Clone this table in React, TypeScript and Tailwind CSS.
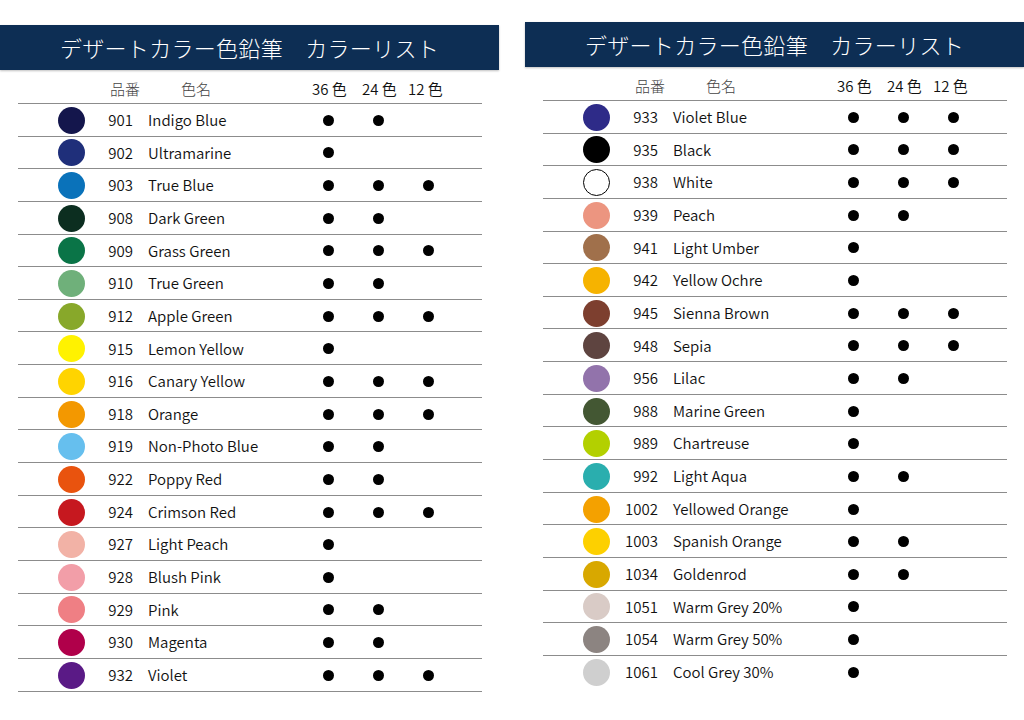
type Pencil = {
  code: string
  name: string
  color: string
  sets: [boolean, boolean, boolean]
}

const leftList: Pencil[] = [
  { code: "901", name: "Indigo Blue", color: "#14164c", sets: [true, true, false] },
  { code: "902", name: "Ultramarine", color: "#1f2f7a", sets: [true, false, false] },
  { code: "903", name: "True Blue", color: "#0a72ba", sets: [true, true, true] },
  { code: "908", name: "Dark Green", color: "#0c2e20", sets: [true, true, false] },
  { code: "909", name: "Grass Green", color: "#0a7447", sets: [true, true, true] },
  { code: "910", name: "True Green", color: "#6fb07a", sets: [true, true, false] },
  { code: "912", name: "Apple Green", color: "#88a82a", sets: [true, true, true] },
  { code: "915", name: "Lemon Yellow", color: "#fff200", sets: [true, false, false] },
  { code: "916", name: "Canary Yellow", color: "#ffd400", sets: [true, true, true] },
  { code: "918", name: "Orange", color: "#f39800", sets: [true, true, true] },
  { code: "919", name: "Non-Photo Blue", color: "#66bfee", sets: [true, true, false] },
  { code: "922", name: "Poppy Red", color: "#e9530e", sets: [true, true, false] },
  { code: "924", name: "Crimson Red", color: "#c6181f", sets: [true, true, true] },
  { code: "927", name: "Light Peach", color: "#f2b2a6", sets: [true, false, false] },
  { code: "928", name: "Blush Pink", color: "#f29ea8", sets: [true, false, false] },
  { code: "929", name: "Pink", color: "#ef7f84", sets: [true, true, false] },
  { code: "930", name: "Magenta", color: "#b0004a", sets: [true, true, false] },
  { code: "932", name: "Violet", color: "#5a1a86", sets: [true, true, true] },
]

const rightList: Pencil[] = [
  { code: "933", name: "Violet Blue", color: "#2e2b88", sets: [true, true, true] },
  { code: "935", name: "Black", color: "#000000", sets: [true, true, true] },
  { code: "938", name: "White", color: "#ffffff", sets: [true, true, true] },
  { code: "939", name: "Peach", color: "#ec9580", sets: [true, true, false] },
  { code: "941", name: "Light Umber", color: "#a0704b", sets: [true, false, false] },
  { code: "942", name: "Yellow Ochre", color: "#f6b300", sets: [true, false, false] },
  { code: "945", name: "Sienna Brown", color: "#7d3f2f", sets: [true, true, true] },
  { code: "948", name: "Sepia", color: "#5e4440", sets: [true, true, true] },
  { code: "956", name: "Lilac", color: "#9273ab", sets: [true, true, false] },
  { code: "988", name: "Marine Green", color: "#435733", sets: [true, false, false] },
  { code: "989", name: "Chartreuse", color: "#b3d000", sets: [true, false, false] },
  { code: "992", name: "Light Aqua", color: "#2aaeae", sets: [true, true, false] },
  { code: "1002", name: "Yellowed Orange", color: "#f4a100", sets: [true, false, false] },
  { code: "1003", name: "Spanish Orange", color: "#fdd000", sets: [true, true, false] },
  { code: "1034", name: "Goldenrod", color: "#d8a800", sets: [true, true, false] },
  { code: "1051", name: "Warm Grey 20%", color: "#d9cbc6", sets: [true, false, false] },
  { code: "1054", name: "Warm Grey 50%", color: "#8c8481", sets: [true, false, false] },
  { code: "1061", name: "Cool Grey 30%", color: "#cfcfcf", sets: [true, false, false] },
]

function Dot({ on }: { on: boolean }) {
  return (
    <div className="w-[50px] flex justify-center">
      {on && <div className="w-[11px] h-[11px] rounded-full bg-black" />}
    </div>
  )
}

function Panel({ list, lastLine, className }: { list: Pencil[]; lastLine: boolean; className: string }) {
  return (
    <div className={`w-[499px] ${className}`}>
      <div className="h-[45px] bg-[#0d2e54] flex items-center justify-center shadow-[0_1px_2px_rgba(0,0,0,0.25)]">
        <span className="text-white text-[22px] font-light tracking-[0.3px]">デザートカラー色鉛筆　カラーリスト</span>
      </div>
      <div className="ml-[18px] w-[464px]">
        <div className="h-[33px] flex items-end pb-[3px] text-[15px] font-[350] text-[#111]">
          <span className="ml-[92px] w-[71px] text-[#444] font-light">品番</span>
          <span className="w-[131px] text-[#444] font-light">色名</span>
          <span className="w-[50px]">36 色</span>
          <span className="w-[46px]">24 色</span>
          <span className="w-[50px]">12 色</span>
        </div>
        <div className="border-t border-[#8c8c8c]">
          {list.map((p, i) => (
            <div
              key={p.code}
              className={`h-[32.65px] flex items-center pt-[1px] text-[15px] font-[350] text-[#111] ${
                i < list.length - 1 || lastLine ? "border-b border-[#8c8c8c]" : ""
              }`}
            >
              <div className="w-[92px] pl-[40px]">
                <div
                  className={`w-[27px] h-[27px] rounded-full ${p.code === "938" ? "border-[1.5px] border-black" : ""}`}
                  style={{ backgroundColor: p.color }}
                />
              </div>
              <span className="w-[23px] whitespace-nowrap flex justify-end">{p.code}</span>
              <span className="ml-[15px] w-[155px] whitespace-nowrap">{p.name}</span>
              <Dot on={p.sets[0]} />
              <Dot on={p.sets[1]} />
              <Dot on={p.sets[2]} />
            </div>
          ))}
        </div>
      </div>
    </div>
  )
}

export default function App() {
  return (
    <div
      className="w-[1024px] h-[720px] bg-white flex"
      style={{ fontFamily: '"Noto Sans CJK JP", "Noto Sans", sans-serif' }}
    >
      <Panel list={leftList} lastLine={true} className="mt-[25px]" />
      <Panel list={rightList} lastLine={false} className="ml-[26px] mt-[22px]" />
    </div>
  )
}
